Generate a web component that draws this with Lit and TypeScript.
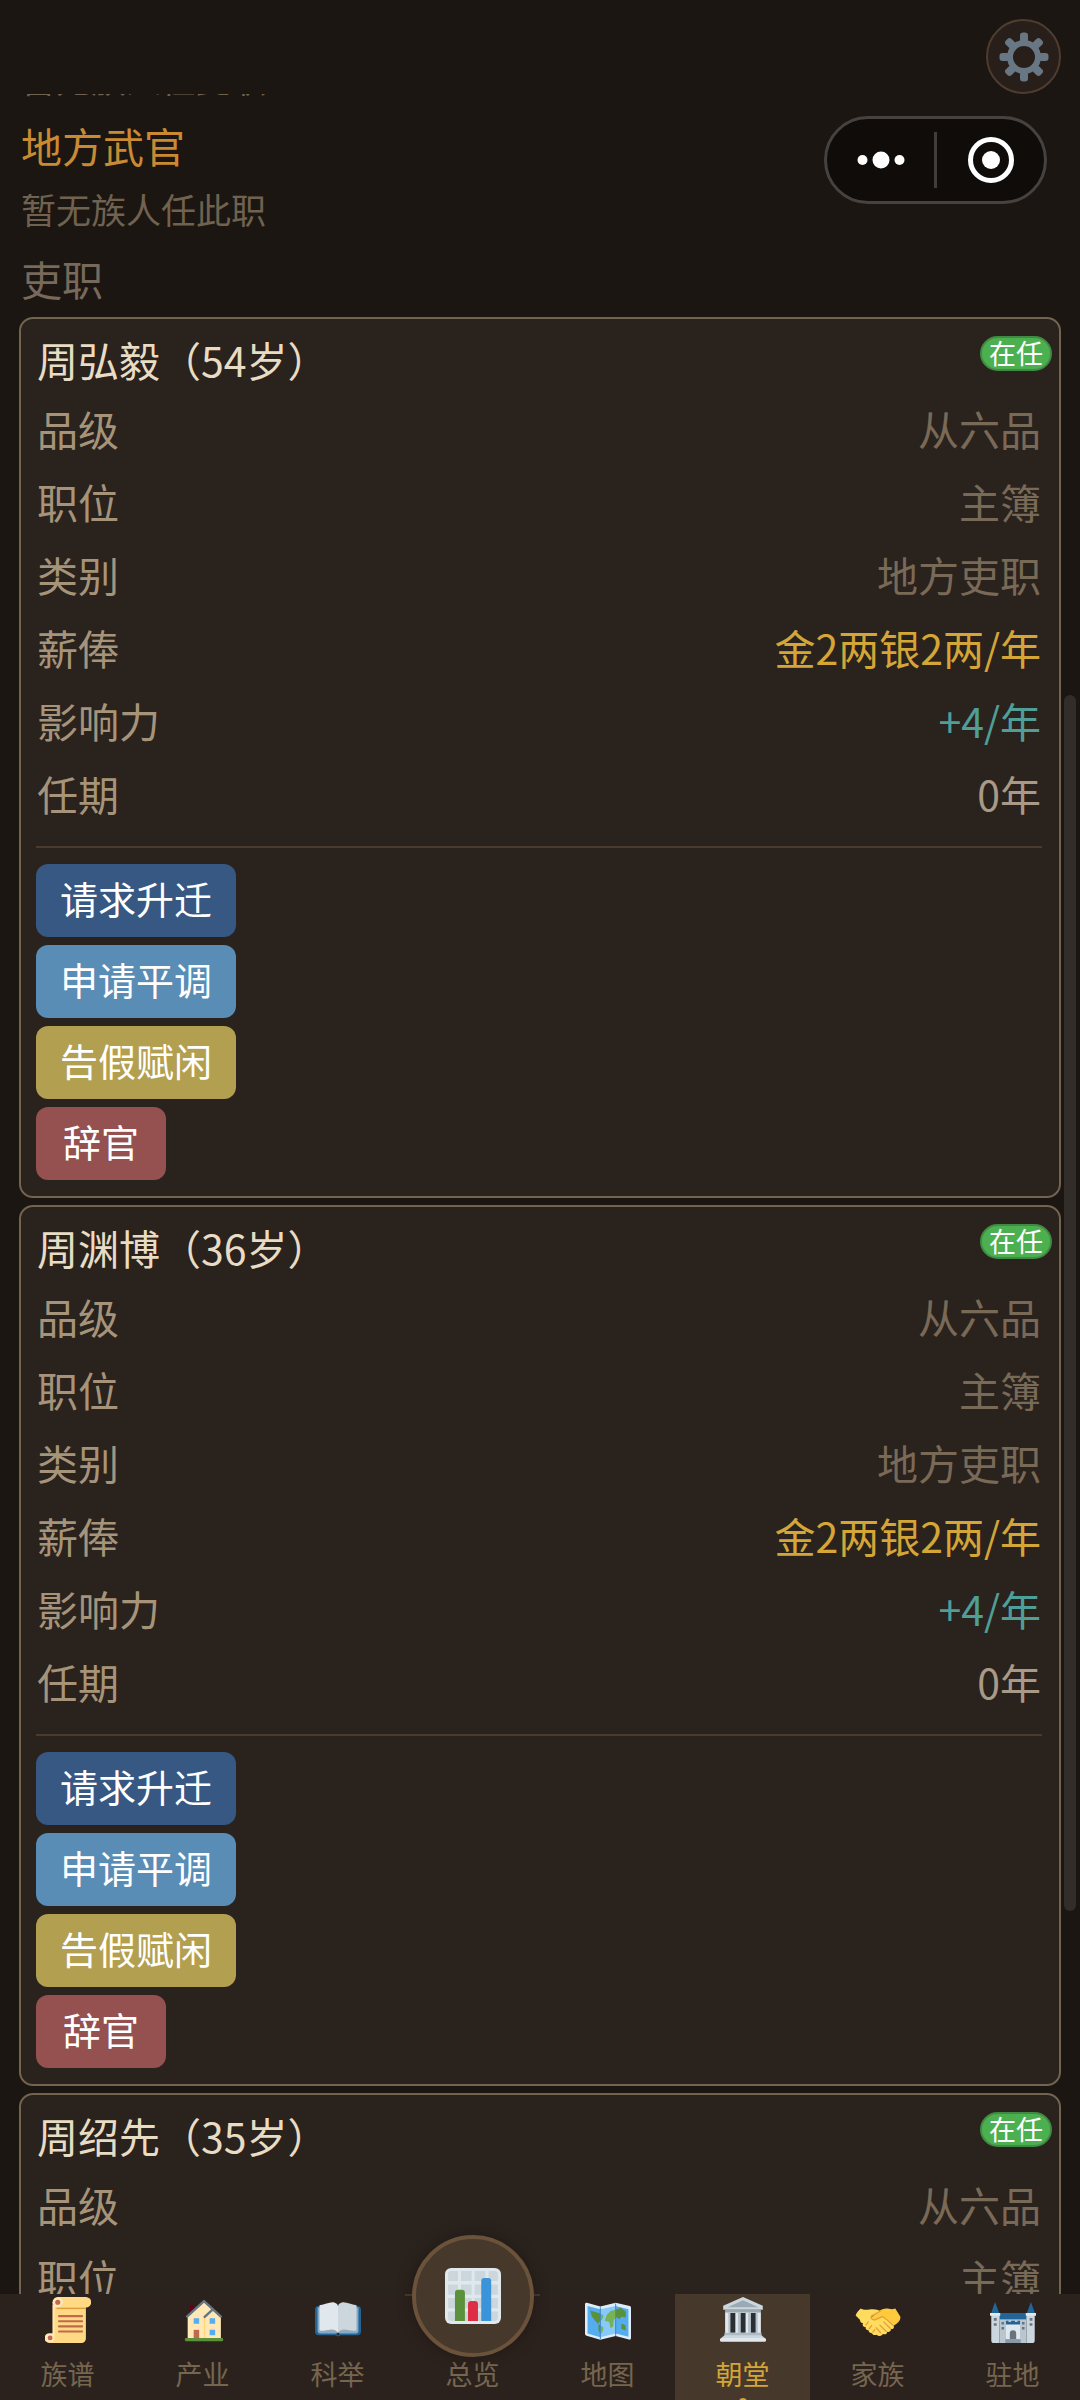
import { LitElement, css, html, svg } from "lit";
import { customElement, property, query, state } from "lit/decorators.js";
import { classMap } from "lit/directives/class-map.js";

interface Official {
  name: string;
  age: number;
  status: string;
  rank: string;
  post: string;
  kind: string;
  salary: string;
  influence: string;
  term: string;
}

const official = (name: string, age: number): Official => ({
  name,
  age,
  status: "在任",
  rank: "从六品",
  post: "主簿",
  kind: "地方吏职",
  salary: "金2两银2两/年",
  influence: "+4/年",
  term: "0年",
});

const officials = [official("周弘毅", 54), official("周渊博", 36), official("周绍先", 35)];

const actions = [
  { label: "请求升迁", tone: "promote" },
  { label: "申请平调", tone: "transfer" },
  { label: "告假赋闲", tone: "leave" },
  { label: "辞官", tone: "resign" },
];

// All icons share a 36 x 36 box
const icons: Record<string, unknown> = {
  scroll: svg`
    <path fill="#ffd983" d="M6 4v24.500L4 36h24.500a3.500 3.500 0 0 0 3.500-3.500V4z"/>
    <path fill="#ffe8b6" d="M6 6h1.500v26a4 4 0 0 1-4 4 3.800 3.800 0 1 1 0-7.700H6z"/>
    <path fill="#ffd983" d="M10 0h22a4 4 0 0 1 0 8.300H10z"/>
    <circle cx="10" cy="4.100" r="4.100" fill="#ffe8b6"/>
    <circle cx="10" cy="4.100" r="2" fill="#c1694f"/>
    <circle cx="4" cy="32" r="1.900" fill="#c1694f"/>
    <path fill="#e39f3d" d="M9 8.300h23v1.200H9z"/>
    <path stroke="#c1694f" stroke-width="1.700" stroke-linecap="round" d="M11 15h18M11 19h18M11 23h18M11 27h18"/>`,
  house: svg`
    <path fill="#66001a" d="M7.500 6h3v7h-3z"/>
    <path fill="#ffe8b6" d="M18.700 4 6 15.500V33h26V15.500z"/>
    <path fill="#ffcc4d" opacity=".6" d="M18.700 16h1V33h-1z"/>
    <path fill="none" stroke="#66757f" stroke-width="1.900" stroke-linecap="round" stroke-linejoin="round" d="M5.500 15.300 18.800 3.200 32 15.300M19.300 15.600l6.200-5.800"/>
    <path fill="#55acee" d="M10.700 16.600H15v4.400h-4.300zM23.200 16.600h4.300v4.400h-4.300zM23.200 25.700h4.300V30h-4.300z"/>
    <path fill="#c1694f" d="M10.700 25.700H15v6.600h-4.300z"/>
    <rect x="3.800" y="32" width="30" height="2.700" rx="1" fill="#5c913b"/>`,
  book: svg`
    <path fill="#226699" d="M3 7h30a3 3 0 0 1 3 3v17a3 3 0 0 1-3 3H20l-2 1-2-1H3a3 3 0 0 1-3-3V10a3 3 0 0 1 3-3z"/>
    <path fill="#8ba9c0" d="M2 8h32v18.500a2 2 0 0 1-2 2H4a2 2 0 0 1-2-2z"/>
    <path fill="#e1e8ed" d="M3.500 6.500C8 6 12 3.500 15 4.300c2 .5 3 1.700 3 3.200V28c-2-2.500-4.500-2.400-7-2.200-3 .2-5.500 1.200-7.500.4z"/>
    <path fill="#ccd6dd" d="M32.500 6.500C28 6 24 3.500 21 4.300c-2 .5-3 1.700-3 3.200V28c2-2.500 4.500-2.400 7-2.200 3 .2 5.500 1.200 7.500.4z"/>
    <path fill="#99aab5" d="M18 28c-2-2.500-4.500-2.400-7-2.200l-3 .6c4-.2 7 0 8.500 1.600h3c1.500-1.600 4.500-1.800 8.500-1.600l-3-.6c-2.500-.2-5-.3-7 2.200z"/>
    <circle cx="18" cy="29" r="1.100" fill="#292f33"/>`,
  chart: svg`
    <rect width="36" height="36" rx="4" fill="#e1e8ed"/>
    <path fill="#ccd6dd" d="M4 2h4.400v6.400H2V4a2 2 0 0 1 2-2zM10.300 2h6.800v6.400h-6.800zM19 2h7v6.400h-7zM28 2h4a2 2 0 0 1 2 2v4.400h-6zM2 10.600h6.400v6.600H2zM10.300 10.600h6.800v6.600h-6.800zM19 10.600h7v6.600h-7zM28 10.600h6v6.600h-6zM2 19.300h6.400v6.600H2zM10.300 19.300h6.800v6.600h-6.800zM19 19.300h7v6.600h-7zM28 19.300h6v6.600h-6zM2 28h6.400v6H4a2 2 0 0 1-2-2zM10.300 28h6.800v6h-6.800zM19 28h7v6h-7zM28 28h6v4a2 2 0 0 1-2 2h-4z"/>
    <path fill="#5c913b" d="M6.400 34V16a2 2 0 0 1 2-2h2.400a2 2 0 0 1 2 2v18z"/>
    <path fill="#dd2e44" d="M14.800 34V23.200a2 2 0 0 1 2-2h2.400a2 2 0 0 1 2 2V34z"/>
    <path fill="#3b94d9" d="M23.300 34V8.400a2 2 0 0 1 2-2h2.400a2 2 0 0 1 2 2V34z"/>`,
  map: svg`
    <path fill="#ddeefa" d="M1.500 4.500 12 7.500l12-3L35 7a1.500 1.500 0 0 1 1 1.500V32a1.300 1.300 0 0 1-1.600 1.300L24 30.500l-12 3L1.200 30.300A1.700 1.700 0 0 1 0 28.700V5.800a1.200 1.200 0 0 1 1.500-1.300z"/>
    <path fill="#55acee" d="M2 7l10 2.500v22L2 28.500zM24 7l10 2.500v21.700L24 28.500z"/>
    <path fill="#88c9f9" d="M12 9.500 24 7v21.500l-12 3z"/>
    <path fill="#5c913b" d="M4 10.500l8 2.500v5.500l-2 2.500-2-2.500-2.500-3zM10.500 21.500l1.500.5v7l-1.500-3zM24 10l4-1.500 4 3v4.500l-3.500-.5-1.500 2-3-2zM28.500 21l3 1 .5 4-3.500-1z"/>
    <path fill="#77b255" d="M12 13l2.500 1.500-1 3-1.500 1.500zM12 22l2.500 2-1 3.500L12 29zM17 14l3-3 4-1v6l-1.500 2-.5 5-2 1.500-1-5-3.500-1z"/>
    <path stroke="#3b88c3" stroke-width=".8" d="M12 8v25M24 5v25.500"/>`,
  temple: svg`
    <path fill="#ccd6dd" d="M18 0 2.500 6.800V10h31V6.800z"/>
    <path fill="#9aaab4" d="M18 2.500 6 8h24z"/>
    <path fill="#99aab5" d="M4 10h28v2H4z"/>
    <path fill="#e1e8ed" d="M4 12h28v17H4z"/>
    <path fill="#292f33" d="M8 12.500h4v15.500H8zM16 12.500h4v15.500h-4zM24 12.500h4v15.500h-4z"/>
    <path fill="#b5c2cb" d="M6.500 12h1.500v16H6.500zM14 12h2v16h-2zM22 12h2v16h-2zM28 12h1.500v16H28z"/>
    <path fill="#aebbc5" d="M3.500 28h29v2.500h-29z"/>
    <path fill="#ccd6dd" d="M3.500 30h29l3 2.500H.5z"/>
    <rect y="32" width="36" height="3" rx="1.200" fill="#e1e8ed"/>`,
  handshake: svg`
    <path fill="#ffcb3d" d="M18 11.500c3-2 6-3 8.500-2.300 2 .6 3.300.3 5-.2l4 6.500c.3 2-1 4-3 5.500l-6 4-10-3-5-5z"/>
    <path fill="#ffdc5d" d="M4.500 9C8 11 11 9.500 14 9.500c2.500 0 4.500.8 6 1.500l-7 3.800c-1.500 1.500 1 4.200 4 2.500l4.500-2c3 2 6 4.700 8.500 7 1.300 1.600-.3 3.400-2 2.600.5 1.700-1.200 3-2.800 2.200 0 1.700-1.800 2.700-3.400 1.700-.5 2-3.300 2.200-5 .7-1.500.8-3 0-3.500-1.200-1.700.2-2.700-1-2.700-2.200-1.800 0-2.500-1.300-2.300-2.600-2 0-2.800-1.600-2-3-1.800-.3-2.500-1.500-2.300-2.500L.5 14.500C1.300 12 3 10.500 4.500 9z"/>
    <path fill="none" stroke="#e39f3d" stroke-width="1" stroke-linecap="round" d="M20 11l-7 3.800c-1.500 1.500 1 4.200 4 2.500l4.500-2c3.500 2.400 6 4.500 8.500 7M22.500 19.500l5 5M19.500 22l5 5M16.500 24l3.500 4M8.500 22l2-2.500M11 25l2-2.500M14 27.500l1.500-2"/>`,
  castle: svg`
    <path fill="#269" d="M4 4l3.500 9.500h-7zM32 4l3.500 9.500h-7zM7 12.500h22V19H7z"/>
    <path fill="#ccd6dd" d="M1 14h6.500v22H3a2 2 0 0 1-2-2zM28.500 14H35v20a2 2 0 0 1-2 2h-4.500z"/>
    <path fill="#e1e8ed" d="M0 12.500h8v2.200H0zM28 12.500h8v2.200h-8z"/>
    <path fill="#b9c6cf" d="M7.500 17.500h21V36h-21z"/>
    <path fill="#e1e8ed" d="M12.500 20h11v13h-11z"/>
    <path fill="#269" d="M12.500 18.500h2v1h2v-1h3v1h2v-1h2v3h-11z"/>
    <path fill="#66757f" d="M3 16.500h2.200v2H3zM3 20.500h2.200v2H3zM31 16.500h2.200v2H31zM31 20.500h2.200v2H31zM9 19.500h2v2H9zM9 23.500h2v2H9zM25 19.500h2v2h-2zM25 23.500h2v2h-2zM15.500 33v-4.500a2.500 2.500 0 0 1 5 0V33z"/>
    <path fill="#8899a6" d="M12 33h12v3H12z"/>`,
};

const tabs = [
  { id: "clan", label: "族谱", icon: "scroll" },
  { id: "estate", label: "产业", icon: "house" },
  { id: "exam", label: "科举", icon: "book" },
  { id: "overview", label: "总览", icon: "chart" },
  { id: "map", label: "地图", icon: "map" },
  { id: "court", label: "朝堂", icon: "temple" },
  { id: "family", label: "家族", icon: "handshake" },
  { id: "garrison", label: "驻地", icon: "castle" },
];

@customElement("official-card")
export class OfficialCard extends LitElement {
  @property({ attribute: false }) person!: Official;

  static styles = css`
    :host {
      display: block;
      position: relative;
      padding: 15px 17px 16px 15px;
      border: 2px solid #73644f;
      border-radius: 14px;
      background: #2a221d;
    }

    h4 {
      margin: 0;
      padding: 0 1px 10px;
      font-size: 41px;
      line-height: 51px;
      font-weight: 400;
      color: #e8dcc4;
    }

    .badge {
      position: absolute;
      top: 17px;
      right: 7px;
      padding: 0 7px 2px;
      border: 2px solid #3f8b43;
      border-radius: 18px;
      background: #4caf50;
      color: #fff;
      font-size: 27px;
      line-height: 29px;
    }

    dl {
      margin: 0;
    }

    .row {
      display: flex;
      justify-content: space-between;
      padding: 0 1px 6px;
      font-size: 41px;
      line-height: 67px;
    }

    dt {
      color: #a6947a;
    }

    dd {
      margin: 0;
      color: #796957;
    }

    .gold {
      color: #d4a537;
    }

    .teal {
      color: #4f9f98;
    }

    .plain {
      color: #a89a86;
    }

    .actions {
      display: flex;
      flex-direction: column;
      align-items: flex-start;
      gap: 8px;
      margin-top: 13px;
      padding-top: 16px;
      border-top: 2px solid #4a3b2e;
    }

    button {
      min-width: 130px;
      padding: 0 24px 6px;
      border: 0;
      border-radius: 12px;
      color: #fff;
      font: inherit;
      font-size: 38px;
      line-height: 67px;
    }

    .promote {
      background: #375882;
    }

    .transfer {
      background: #5a8db5;
    }

    .leave {
      background: #b39f50;
    }

    .resign {
      background: #955050;
    }
  `;

  render() {
    const p = this.person;
    return html`
      <h4>${p.name}（${p.age}岁）</h4>
      <span class="badge">${p.status}</span>
      <dl>
        <div class="row"><dt>品级</dt><dd>${p.rank}</dd></div>
        <div class="row"><dt>职位</dt><dd>${p.post}</dd></div>
        <div class="row"><dt>类别</dt><dd>${p.kind}</dd></div>
        <div class="row"><dt>薪俸</dt><dd class="gold">${p.salary}</dd></div>
        <div class="row"><dt>影响力</dt><dd class="teal">${p.influence}</dd></div>
        <div class="row"><dt>任期</dt><dd class="plain">${p.term}</dd></div>
      </dl>
      <div class="actions">
        ${actions.map((a) => html`<button type="button" class=${a.tone}>${a.label}</button>`)}
      </div>
    `;
  }
}

@customElement("tab-bar")
export class TabBar extends LitElement {
  @property() active = "court";

  static styles = css`
    :host {
      display: block;
      background: #2c221d;
    }

    nav {
      display: grid;
      grid-template-columns: repeat(8, 1fr);
      height: 106px;
    }

    a {
      position: relative;
      display: flex;
      flex-direction: column;
      align-items: center;
      padding-top: 3px;
      overflow: hidden;
      color: #76664f;
      font-size: 27px;
      line-height: 40px;
      text-decoration: none;
    }

    svg {
      display: block;
      width: 46px;
      height: 46px;
    }

    .label {
      margin-top: 11px;
    }

    .active {
      background: #46382b;
      color: #d4a537;
    }

    .active::after {
      content: "";
      position: absolute;
      bottom: -6px;
      width: 8px;
      height: 8px;
      border-radius: 50%;
      background: #d4a537;
    }

    .center {
      overflow: visible;
      padding-top: 0;
      border-top: 2px solid #4a3a2b;
    }

    .center .label {
      margin-top: 58px;
    }

    .disc {
      position: absolute;
      top: -61px;
      display: grid;
      place-items: center;
      width: 114px;
      height: 114px;
      border: 4px solid #6b523a;
      border-radius: 50%;
      background: #46382b;
      box-shadow: 0 0 16px rgba(0, 0, 0, 0.3);
    }

    .disc svg {
      width: 56px;
      height: 56px;
    }
  `;

  private pick(id: string, e: Event) {
    e.preventDefault();
    this.dispatchEvent(new CustomEvent("tab-change", { detail: id }));
  }

  render() {
    return html`
      <nav>
        ${tabs.map((t) => {
          const center = t.id === "overview";
          const icon = html`<svg viewBox="0 0 36 36" aria-hidden="true">${icons[t.icon]}</svg>`;
          return html`
            <a
              href="#${t.id}"
              class=${classMap({ center, active: t.id === this.active })}
              @click=${(e: Event) => this.pick(t.id, e)}
            >
              ${center ? html`<span class="disc">${icon}</span>` : icon}
              <span class="label">${t.label}</span>
            </a>
          `;
        })}
      </nav>
    `;
  }
}

@customElement("app-root")
export class AppRoot extends LitElement {
  @state() private tab = "court";
  @query("main") private list!: HTMLElement;

  static styles = css`
    :host {
      display: flex;
      flex-direction: column;
      height: 100vh;
      background: #1b1612;
      font-family: "Noto Sans CJK SC", "Noto Sans", sans-serif;
    }

    header {
      display: flex;
      justify-content: flex-end;
      padding: 19px 19px 0;
    }

    button {
      padding: 0;
      border: 0;
      background: none;
    }

    svg {
      display: block;
    }

    .settings {
      display: grid;
      place-items: center;
      width: 75px;
      height: 75px;
      border: 2px solid #4e3d2f;
      border-radius: 50%;
      background: #281f1a;
    }

    .capsule {
      position: absolute;
      top: 116px;
      right: 33px;
      z-index: 1;
      display: flex;
      align-items: center;
      box-sizing: border-box;
      width: 223px;
      height: 88px;
      border: 3px solid #454240;
      border-radius: 44px;
      background: #0f0c09;
    }

    .capsule button {
      display: grid;
      place-items: center;
      flex: 1;
      height: 100%;
    }

    .capsule i {
      width: 3px;
      height: 56px;
      background: #403d3a;
    }

    .body {
      position: relative;
      flex: 1;
      min-height: 0;
    }

    main {
      box-sizing: border-box;
      height: 100%;
      padding: 0 19px;
      overflow-y: auto;
      scrollbar-width: none;
    }

    .thumb {
      position: absolute;
      top: 27.3%;
      right: 4px;
      width: 12px;
      height: 55.3%;
      border-radius: 6px;
      background: #332d2a;
    }

    section {
      padding: 0 2px 5px;
    }

    h3,
    p {
      margin: 0;
      padding-bottom: 4px;
      font-weight: 400;
      line-height: 59px;
    }

    h3 {
      font-size: 41px;
      color: #c98a33;
    }

    p {
      font-size: 35px;
      color: #71624f;
    }

    h3.muted {
      padding: 2px 2px 9px;
      color: #78695a;
    }

    .cards {
      display: grid;
      gap: 7px;
      padding-bottom: 24px;
    }
  `;

  async firstUpdated() {
    await this.updateComplete;
    await Promise.all([...this.renderRoot.querySelectorAll<LitElement>("official-card")].map((c) => c.updateComplete));
    this.list.scrollTop = 46;
  }

  render() {
    return html`
      <header>
        <button type="button" class="settings" aria-label="设置">
          <svg width="50" height="50" viewBox="-25 -25 50 50">
            <circle r="14" fill="none" stroke="#687783" stroke-width="6" />
            ${[0, 45, 90, 135, 180, 225, 270, 315].map(
              (deg) => svg`<rect x="-4" y="-24.500" width="8" height="10" rx="3" fill="#687783" transform="rotate(${deg})"/>`
            )}
          </svg>
        </button>
      </header>

      <div class="capsule">
        <button type="button" aria-label="更多">
          <svg width="48" height="20" viewBox="0 0 48 20" fill="#fff">
            <circle cx="5.500" cy="10" r="5" />
            <circle cx="24" cy="10" r="8.500" />
            <circle cx="42.500" cy="10" r="5" />
          </svg>
        </button>
        <i></i>
        <button type="button" aria-label="关闭">
          <svg width="46" height="46" viewBox="0 0 46 46">
            <circle cx="23" cy="23" r="20.500" fill="none" stroke="#fff" stroke-width="5" />
            <circle cx="23" cy="23" r="9" fill="#fff" />
          </svg>
        </button>
      </div>

      <div class="body">
        <main>
          <section>
            <p>暂无族人任此职</p>
          </section>
          <section>
            <h3>地方武官</h3>
            <p>暂无族人任此职</p>
          </section>
          <h3 class="muted">吏职</h3>
          <div class="cards">
            ${officials.map((o) => html`<official-card .person=${o}></official-card>`)}
          </div>
        </main>
        <div class="thumb"></div>
      </div>

      <tab-bar .active=${this.tab} @tab-change=${(e: CustomEvent) => (this.tab = e.detail)}></tab-bar>
    `;
  }
}
